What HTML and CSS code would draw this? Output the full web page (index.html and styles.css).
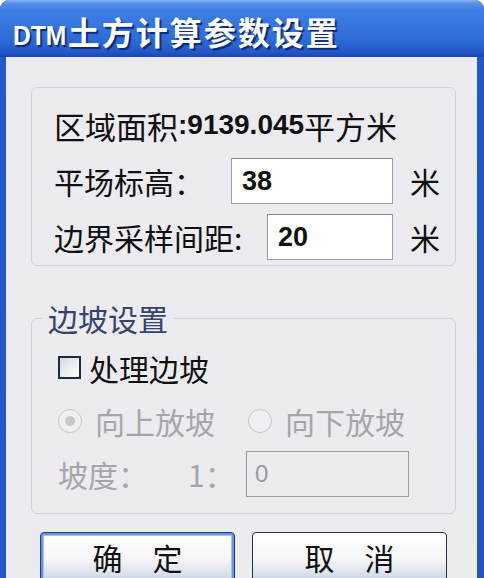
FILE: index.html
```html
<!DOCTYPE html>
<html lang="zh-CN">
<head>
<meta charset="utf-8">
<title>DTM土方计算参数设置</title>
<link rel="stylesheet" href="styles.css">
</head>
<body>
<div class="window">
  <div class="titlebar"><span class="latin">DTM</span>土方计算参数设置</div>
  <div class="client">
    <div class="group">
      <div class="row row-first">
        <span>区域面积</span><span class="num">:9139.045</span><span>平方米</span>
      </div>
      <div class="row">
        <span class="label label-a">平场标高：</span>
        <div class="input input-a"><span class="num">38</span></div>
        <span class="unit">米</span>
      </div>
      <div class="row">
        <span class="label label-b">边界采样间距:</span>
        <div class="input input-b"><span class="num">20</span></div>
        <span class="unit">米</span>
      </div>
    </div>

    <fieldset class="slope">
      <legend>边坡设置</legend>
      <div class="slope-body">
        <div class="row2">
          <span class="check"></span><span class="check-text">处理边坡</span>
        </div>
        <div class="row2 disabled">
          <span class="radio on"></span><span class="radio-text">向上放坡</span>
          <span class="radio second"></span><span class="radio-text">向下放坡</span>
        </div>
        <div class="row2 disabled">
          <span class="slope-label">坡度：</span>
          <span class="ratio">1：</span>
          <div class="input input-c">0</div>
        </div>
      </div>
    </fieldset>

    <div class="buttons">
      <div class="btn default">确　定</div>
      <div class="btn">取　消</div>
    </div>
  </div>
</div>
</body>
</html>
```

FILE: styles.css
```css
html, body {
  margin: 0;
  padding: 0;
  background: #ffffff;
}

body {
  font-family: "Noto Sans CJK SC", "Noto Sans", sans-serif;
}

.window {
  width: 484px;
  height: 578px;
  overflow: hidden;
  display: flex;
  flex-direction: column;
  border-radius: 9px 9px 0 0;
  background: linear-gradient(180deg, #2b63d4 0px, #2559c8 57px, #2454c2 100%);
  box-sizing: border-box;
}

.titlebar {
  height: 57px;
  flex: none;
  box-sizing: border-box;
  padding: 11px 0 0 13px;
  border-radius: 9px 9px 0 0;
  background: linear-gradient(180deg, #8ab4f2 0px, #5a92ea 3px, #3f7ee2 10px, #3474dc 28px, #2c68d4 42px, #2358c6 52px, #1a46ac 57px);
  color: #ffffff;
  font-size: 32px;
  font-weight: 700;
  line-height: 40px;
  letter-spacing: 2px;
  text-shadow: 2px 2px 1px #0c2a78;
  white-space: nowrap;
}

.titlebar .latin {
  font-family: "Liberation Sans", sans-serif;
  font-size: 28px;
  letter-spacing: 0;
  display: inline-block;
  transform: scaleX(0.88);
  transform-origin: left center;
  margin-right: -6px;
}

.client {
  flex: 1;
  margin: 0 7px 0 6px;
  background: #ecebef;
  padding: 30px 21px 0 25px;
  display: flex;
  flex-direction: column;
  overflow: hidden;
}

.group {
  height: 188px;
  box-sizing: border-box;
  border: 1px solid #d3d2d8;
  border-radius: 6px;
  padding: 9px 0 0 22px;
  color: #111111;
}

.row {
  height: 56px;
  display: flex;
  align-items: center;
  font-size: 30px;
  white-space: nowrap;
}

.row-first {
  font-size: 31px;
}

.row-first .num {
  font-size: 28px;
}

.num {
  font-family: "Liberation Sans", sans-serif;
  font-weight: 700;
  font-size: 27px;
}

.label {
  flex: none;
}

.label-a { width: 177px; }
.label-b { width: 213px; }

.input {
  flex: none;
  height: 46px;
  box-sizing: border-box;
  border: 1px solid #9c9ca0;
  border-top-color: #8a8a8e;
  background: #ffffff;
  display: flex;
  align-items: center;
  padding-left: 10px;
}

.input-a { width: 162px; }
.input-b { width: 126px; }

.unit {
  margin-left: 17px;
}

.slope {
  margin: 35px 0 0 0;
  border: 1px solid #d3d2d8;
  border-radius: 6px;
  padding: 0 0 13px 10px;
  min-width: 0;
}

.slope legend {
  padding: 0 6px;
  font-size: 30px;
  line-height: 34px;
  color: #34446e;
}

.slope-body {
  padding: 6px 0 0 16px;
}

.row2 {
  height: 53px;
  display: flex;
  align-items: center;
  font-size: 30px;
  color: #111111;
  white-space: nowrap;
}

.check {
  width: 23px;
  height: 23px;
  box-sizing: border-box;
  border: 2px solid #1f2b46;
  background: linear-gradient(135deg, #d6d6dc 0%, #f2f2f4 60%, #ffffff 100%);
  flex: none;
}

.check-text {
  margin-left: 8px;
}

.disabled {
  color: #a6a6aa;
}

.radio {
  width: 24px;
  height: 24px;
  box-sizing: border-box;
  border: 1px solid #c6c6ca;
  border-radius: 50%;
  background: #f0f0f2;
  flex: none;
  display: flex;
  align-items: center;
  justify-content: center;
}

.radio.on::after {
  content: "";
  width: 10px;
  height: 10px;
  border-radius: 50%;
  background: #c8c8cc;
}

.radio-text {
  margin-left: 13px;
}

.radio.second {
  margin-left: 33px;
}

.slope-label {
  width: 130px;
}

.ratio {
  width: 58px;
}

.input-c {
  width: 163px;
  background: #ecebef;
  border-color: #9a9a9e;
  color: #9a9a9e;
  font-family: "Liberation Sans", sans-serif;
  font-size: 24px;
  padding-left: 8px;
}

.buttons {
  display: flex;
  gap: 17px;
  margin: 18px 0 0 9px;
}

.btn {
  width: 195px;
  height: 50px;
  flex: none;
  box-sizing: border-box;
  border: 1px solid #22304c;
  border-radius: 4px;
  background: linear-gradient(180deg, #ffffff 0%, #f6f6f8 55%, #dfe4ee 80%, #c9d3e6 100%);
  display: flex;
  align-items: center;
  justify-content: center;
  font-size: 30px;
  line-height: 40px;
  color: #111111;
  white-space: pre;
}

.btn.default {
  border: 1px solid #1c3c8c;
  box-shadow: inset 0 0 0 2px #6f95d8, inset 0 0 0 3px #a9c2ec;
}
```
